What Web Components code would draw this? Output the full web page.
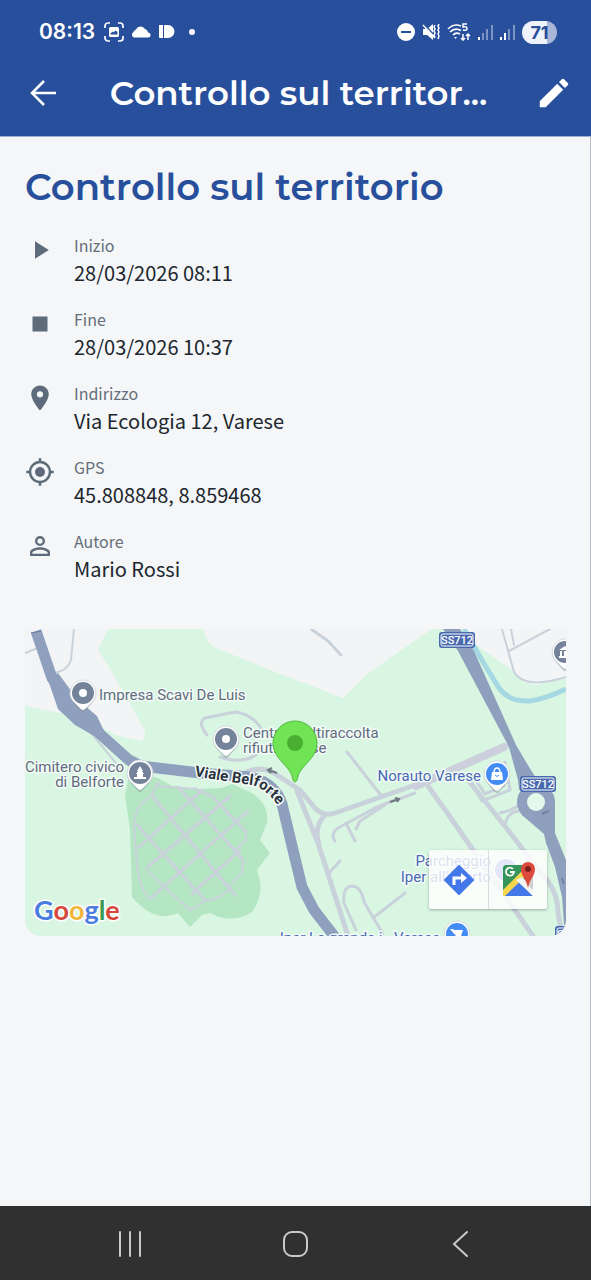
<!DOCTYPE html>
<html lang="it">
<head>
<meta charset="utf-8">
<meta name="viewport" content="width=device-width, initial-scale=1">
<title>Controllo sul territorio</title>
<style>
    body {
        margin: 0;
        background: #f4f6f8;
    }
</style>
</head>
<body>
<control-page>
    <status-bar slot="top" time="08:13" battery="71"></status-bar>
    <app-bar slot="top">Controllo sul territor...</app-bar>

    <page-title>Controllo sul territorio</page-title>
    <detail-list>
        <detail-row icon="play" label="Inizio">28/03/2026 08:11</detail-row>
        <detail-row icon="stop" label="Fine">28/03/2026 10:37</detail-row>
        <detail-row icon="place" label="Indirizzo">Via Ecologia 12, Varese</detail-row>
        <detail-row icon="gps" label="GPS">45.808848, 8.859468</detail-row>
        <detail-row icon="person" label="Autore">Mario Rossi</detail-row>
    </detail-list>
    <place-map></place-map>

    <system-nav slot="bottom"></system-nav>
</control-page>

<script>
// Icons of the detail rows, all on a 24 unit grid.
const ICONS = {
    play: '<path d="M8 5v14l11-7z"/>',
    stop: '<path d="M6 6h12v12H6z"/>',
    place: '<path d="M12 2C8.13 2 5 5.13 5 9c0 5.25 7 13 7 13s7-7.75 7-13c0-3.87-3.13-7-7-7zm0 9.500a2.500 2.500 0 1 1 0-5 2.500 2.500 0 0 1 0 5z"/>',
    gps: '<path d="M12 8a4 4 0 1 0 0 8 4 4 0 0 0 0-8zm8.940 3A9 9 0 0 0 13 3.060V1h-2v2.060A9 9 0 0 0 3.060 11H1v2h2.060A9 9 0 0 0 11 20.940V23h2v-2.060A9 9 0 0 0 20.940 13H23v-2h-2.060zM12 19a7 7 0 1 1 0-14 7 7 0 0 1 0 14z"/>',
    person: '<path d="M12 5.900a2.100 2.100 0 1 1 0 4.200 2.100 2.100 0 0 1 0-4.200m0 9c2.970 0 6.100 1.460 6.100 2.100v1.100H5.900V17c0-.64 3.130-2.100 6.100-2.100M12 4a4 4 0 1 0 0 8 4 4 0 0 0 0-8zm0 9c-2.670 0-8 1.340-8 4v3h16v-3c0-2.660-5.330-4-8-4z"/>'
};

// ### Page frame: header, scrolling content, system bar ###
class ControlPage extends HTMLElement {
    constructor() {
        super();
        this.attachShadow({ mode: 'open' });
    }

    connectedCallback() {
        this.shadowRoot.innerHTML = `
            <style>
                :host {
                    display: flex;
                    flex-direction: column;
                    min-height: 100vh;
                    background: #f4f6f8;
                }
                header {
                    background: #284f9b;
                    color: #fff;
                    border-bottom: 1px solid #9fb0d2;
                }
                main {
                    flex: 1;
                    padding: 28px 24px 24px 25px;
                    border-right: 1px solid #b9bcc2;
                }
            </style>
            <header><slot name="top"></slot></header>
            <main><slot></slot></main>
            <slot name="bottom"></slot>
        `;
    }
}

class StatusBar extends HTMLElement {
    constructor() {
        super();
        this.attachShadow({ mode: 'open' });
    }

    connectedCallback() {
        this.shadowRoot.innerHTML = `
            <style>
                :host {
                    display: flex;
                    align-items: center;
                    justify-content: space-between;
                    height: 36px;
                    padding: 14px 34px 0 39px;
                    font-family: Inter, "Liberation Sans", sans-serif;
                }
                div {
                    display: flex;
                    align-items: center;
                    gap: 7px;
                }
                time {
                    font-size: 21px;
                    font-weight: 600;
                    line-height: 24px;
                    margin-right: 2px;
                }
                svg {
                    display: block;
                    fill: currentColor;
                }
                .battery {
                    width: 35px;
                    border-radius: 12px;
                    background: linear-gradient(90deg, #eef2fa 72%, #a9b8d8 72%);
                    color: #284f9b;
                    font-size: 18px;
                    font-weight: 700;
                    line-height: 23px;
                    text-align: center;
                }
            </style>
            <div>
                <time>${this.getAttribute('time')}</time>
                <svg width="20" height="20" viewBox="0 0 20 20">
                    <path d="M1 6V4a3 3 0 0 1 3-3h2M14 1h2a3 3 0 0 1 3 3v2M19 14v2a3 3 0 0 1-3 3h-2M6 19H4a3 3 0 0 1-3-3v-2" fill="none" stroke="currentColor" stroke-width="1.700"/>
                    <path fill-rule="evenodd" d="M6.500 5h7A1.500 1.500 0 0 1 15 6.500v7a1.500 1.500 0 0 1-1.500 1.500h-7A1.500 1.500 0 0 1 5 13.500v-7A1.500 1.500 0 0 1 6.500 5zM6.500 12.500h7V10l-2-1.500-2 2-1-1-2 2z"/>
                </svg>
                <svg width="20" height="14" viewBox="0 0 20 14"><path d="M3 12.500A3 3 0 0 1 2.500 7 4 4 0 0 1 5 4.500 5 5 0 0 1 14 4 4 4 0 0 1 17 7.500a2.500 2.500 0 0 1 0 5z"/></svg>
                <svg width="18" height="14" viewBox="0 0 18 14"><path d="M1 0h4v13H2a1 1 0 0 1-1-1zM6 0h4a6.500 6.500 0 0 1 0 13H6z"/></svg>
                <svg width="16" height="8" viewBox="0 0 16 8"><circle cx="9" cy="4" r="3"/></svg>
            </div>
            <div>
                <svg width="18" height="18" viewBox="0 0 18 18"><path fill-rule="evenodd" d="M9 0a9 9 0 1 1 0 18A9 9 0 0 1 9 0zM4 8v2h10V8z"/></svg>
                <svg width="18" height="18" viewBox="0 0 18 18">
                    <path d="M1 6h4l6-5v16l-6-5H1z"/>
                    <path d="M2 1l10 11" stroke="#284f9b" stroke-width="1.500"/>
                    <path d="M1 2l12 13M13 2l-1 2 1 2-1 2 1 2-1 2 1 2M17 1l-1 2 1 2-1 2 1 2-1 2 1 2-1 3" fill="none" stroke="currentColor" stroke-width="1.500"/>
                </svg>
                <svg width="24" height="18" viewBox="0 0 24 18">
                    <path d="M1 6Q7 0 14 3M3 9Q8 4 14 7.500M6 12Q9 9 13 11" fill="none" stroke="currentColor" stroke-width="1.700"/>
                    <path d="M7 14h3l-1.500 2z"/>
                    <path d="M16 11v6M14 15l2 2 2-2M21 17v-6M19 13l2-2 2 2M20 1h-4v3q4-1 4 1.500T16 7" fill="none" stroke="currentColor" stroke-width="1.500"/>
                </svg>
                <svg width="15" height="16" viewBox="0 0 15 16"><path d="M0 13h2v3H0z"/><path opacity=".4" d="M4 9h2v7H4zM8 5h2v11H8zM13 1h2v15h-2z"/></svg>
                <svg width="15" height="16" viewBox="0 0 15 16"><path d="M0 13h2v3H0zM4 9h2v7H4z"/><path opacity=".4" d="M8 5h2v11H8zM13 1h2v15h-2z"/></svg>
                <span class="battery">${this.getAttribute('battery')}</span>
            </div>
        `;
    }
}

class AppBar extends HTMLElement {
    constructor() {
        super();
        this.attachShadow({ mode: 'open' });
    }

    connectedCallback() {
        this.shadowRoot.innerHTML = `
            <style>
                :host {
                    display: flex;
                    align-items: center;
                    height: 86px;
                    padding: 0 18px 0 24px;
                    font-family: Montserrat, Inter, "Liberation Sans", sans-serif;
                }
                .title {
                    flex: 1;
                    min-width: 0;
                    overflow: hidden;
                    white-space: nowrap;
                    text-align: center;
                    font-size: 34px;
                    font-weight: 600;
                    line-height: 44px;
                }
                button {
                    padding: 0;
                    border: 0;
                    background: none;
                    color: inherit;
                    cursor: pointer;
                }
                svg {
                    display: block;
                }
            </style>
            <button type="button" aria-label="Indietro">
                <svg width="38" height="38" viewBox="0 0 38 38" fill="none" stroke="currentColor" stroke-width="2.500"><path d="M32 19H8M20 7L8 19l12 12"/></svg>
            </button>
            <span class="title"><slot></slot></span>
            <button type="button" aria-label="Modifica">
                <svg width="38" height="38" viewBox="0 0 24 24" fill="currentColor"><path d="M3 17.250V21h3.750L17.810 9.940l-3.750-3.750L3 17.250zM20.710 7.040a1 1 0 0 0 0-1.410l-2.340-2.340a1 1 0 0 0-1.410 0l-1.830 1.830 3.750 3.750 1.830-1.830z"/></svg>
            </button>
        `;
    }
}

class PageTitle extends HTMLElement {
    constructor() {
        super();
        this.attachShadow({ mode: 'open' });
    }

    connectedCallback() {
        this.shadowRoot.innerHTML = `
            <style>
                :host {
                    display: block;
                    margin-bottom: 23px;
                }
                h1 {
                    margin: 0;
                    color: #284f9b;
                    font: 600 37px/44px Montserrat, Inter, "Liberation Sans", sans-serif;
                }
            </style>
            <h1><slot></slot></h1>
        `;
    }
}

class DetailList extends HTMLElement {
    constructor() {
        super();
        this.attachShadow({ mode: 'open' });
    }

    connectedCallback() {
        this.shadowRoot.innerHTML = `
            <style>
                :host {
                    display: flex;
                    flex-direction: column;
                    gap: 18px;
                    margin-bottom: 45px;
                }
            </style>
            <slot></slot>
        `;
    }
}

class DetailRow extends HTMLElement {
    constructor() {
        super();
        this.attachShadow({ mode: 'open' });
    }

    connectedCallback() {
        this.shadowRoot.innerHTML = `
            <style>
                :host {
                    display: flex;
                    gap: 19px;
                    font-family: "Noto Sans CJK JP", "Noto Sans", sans-serif;
                }
                svg {
                    flex: none;
                    margin-top: 3px;
                    fill: #5d6b7a;
                }
                .label {
                    color: #646e79;
                    font-size: 16px;
                    line-height: 26px;
                }
                .value {
                    color: #20262d;
                    font-size: 20px;
                    line-height: 30px;
                }
            </style>
            <svg width="30" height="30" viewBox="0 0 24 24" aria-hidden="true">${ICONS[this.getAttribute('icon')]}</svg>
            <div>
                <div class="label">${this.getAttribute('label')}</div>
                <div class="value"><slot></slot></div>
            </div>
        `;
    }
}

// ### Map card ###
class PlaceMap extends HTMLElement {
    constructor() {
        super();
        this.attachShadow({ mode: 'open' });
    }

    // A small round pin with a tail, the glyph is drawn around 0,0.
    poi(x, y, color, glyph) {
        return `
            <g transform="translate(${x} ${y})">
                <path d="M0-13a13 13 0 0 1 10 21L2 17q-2 2-4 0l-8-9A13 13 0 0 1 0-13z" fill="#7f8b90" opacity=".5" transform="translate(0 1)"/>
                <path d="M0-13a13 13 0 0 1 10 21L2 16q-2 2-4 0l-8-8A13 13 0 0 1 0-13z" fill="#fff" stroke="#d4dcdf"/>
                <circle r="11" fill="${color}"/>
                ${glyph}
            </g>`;
    }

    shield(x, y) {
        return `
            <g transform="translate(${x} ${y})">
                <rect x="-18" y="-8" width="36" height="16" rx="3" fill="#4869ae"/>
                <rect x="-16" y="-6" width="32" height="12" rx="2" fill="none" stroke="#fff"/>
                <text class="shield" y="4">SS712</text>
            </g>`;
    }

    connectedCallback() {
        const dot = '<circle r="4" fill="#fff"/>';
        this.shadowRoot.innerHTML = `
            <style>
                :host {
                    display: block;
                    position: relative;
                    overflow: hidden;
                    border-radius: 0 0 16px 16px;
                    font-family: Roboto, "Liberation Sans", sans-serif;
                }
                .map {
                    display: block;
                    width: 100%;
                    height: auto;
                }
                text {
                    fill: #616d7e;
                    font-size: 15px;
                    stroke: #f3fbf6;
                    stroke-width: 3px;
                    stroke-linejoin: round;
                    paint-order: stroke;
                }
                .end { text-anchor: end; }
                .shop { fill: #4968b4; }
                .street { fill: #29323e; font-weight: 700; }
                .shield {
                    fill: #fff;
                    stroke: none;
                    font-size: 11px;
                    font-weight: 500;
                    text-anchor: middle;
                }
                .google {
                    font-family: Lato, sans-serif;
                    font-size: 27px;
                    font-weight: 700;
                    stroke: #fff;
                }
                .road { fill: none; stroke: #c9d2da; stroke-linecap: round; stroke-linejoin: round; }
                .main { fill: none; stroke: #8ea0bd; stroke-linejoin: round; }
                /* Buttons that float over the map. */
                nav {
                    position: absolute;
                    right: 19px;
                    bottom: 27px;
                    display: flex;
                    background: rgba(255, 255, 255, .8);
                    border-radius: 2px;
                    box-shadow: 0 1px 3px rgba(0, 0, 0, .3);
                }
                nav a {
                    display: grid;
                    place-items: center;
                    width: 59px;
                    height: 59px;
                }
                nav a + a {
                    width: 58px;
                    border-left: 1px solid #d7dfe0;
                }
            </style>
            <svg class="map" viewBox="25 629 541 307" role="img" aria-label="Mappa">
                <defs>
                    <path id="street" d="M194 776Q230 782 252 785 268 789 284 814"/>
                </defs>
                <rect x="25" y="629" width="541" height="307" fill="#d9f6e3"/>
                <path fill="#f3f4f6" d="M25 629H108L98 650 112 672 128 700 145 731Q145 741 140 741L116 735 90 722 75 716 25 706zM203 629L208 642 214 647 270 670 343 698 365 676 391 657 432 629zM462 629L480 648 514 671 523 682 537 685 566 676V629z"/>
                <path fill="#b5e6c4" d="M130 770L158 778 172 786 200 789 222 788 232 784 252 793Q270 805 267 823L260 840 270 853 257 870Q266 892 252 912 232 925 210 913L202 915 190 927 178 913Q155 924 132 897L130 830 125 796z"/>

                <!-- Paths in the cemetery -->
                <g class="road" stroke-width="3">
                    <path d="M195 789L213 797 246 832M178 787L243 860M153 797L235 895M135 823L205 900"/>
                    <path d="M138 848L202 790M147 868L230 796M152 897L248 811M192 894L240 850"/>
                </g>
                <path class="road" stroke-width="2" d="M158 782L152 795Q135 805 134 825L137 865Q140 890 150 899L156 894M147 871L190 910Q198 906 204 901 218 900 226 892L242 872 243 860M246 832V840L235 850M158 786L195 789"/>

                <!-- Minor roads -->
                <g class="road" stroke-width="2">
                    <path d="M74 629L71 660Q68 670 55 673M25 653L38 648M82 722L120 768M502 629L514 672Q525 690 566 677M509 651L550 629M511 629L514 645"/>
                    <path stroke-width="3" d="M207 735Q197 722 205 718L235 712Q253 714 263 731M220 757Q246 766 262 750M311 629L328 641 341 655"/>
                    <path stroke-width="3" d="M347 752L380 794M328 874L340 861M335 841Q330 834 338 828L375 808 397 799M346 823L355 841M356 829L360 821 385 805M356 930L344 903Q342 886 353 886 362 888 364 902L383 934M373 918L405 893"/>
                    <path stroke-width="3" d="M470 780L482 801 510 790 505 762M473 776L485 794 504 786 499 766M500 813Q514 810 522 803M505 826Q507 810 522 811M397 800L415 793"/>
                </g>
                <g class="road" stroke-width="5">
                    <path d="M247 772Q262 765 277 775L300 790 315 808Q323 817 335 813L415 785 507 746"/>
                    <path d="M297 791L318 843 348 936M325 815Q313 828 319 844M428 786L448 814 480 860 533 936M468 780L508 830 540 872Q558 890 558 912L562 936"/>
                    <path stroke-width="8" stroke="#ccd0dd" d="M416 786L504 747"/>
                </g>
                <path fill="none" stroke="#6f7a80" stroke-width="2" d="M268 770l9 3M272 768l-4 2 3 3M390 802l9-3M395 798l4 1-2 3"/>

                <!-- Stream and state roads -->
                <path fill="none" stroke="#a5d8e3" stroke-width="5" d="M464 629L483 662 499 688Q509 702 530 701 545 699 566 689"/>
                <path class="main" stroke-width="11" d="M36 631L52 678 73 707 100 734 129 760 141 766 200 773 250 777Q275 783 282 804L293 850 302 887 314 910 338 941"/>
                <path fill="#8ea0bd" d="M48 680L58 673 78 700 97 716 105 733 94 736 75 725 58 709z"/>
                <path fill="#8ea0bd" d="M443 629H460L474 651 516 745 529 767 540 784 519 790 518 780 509 747 458 651z"/>
                <circle cx="536" cy="802" r="19" fill="#8ea0bd"/>
                <path fill="#8ea0bd" d="M522 815L544 834 546 843 555 867 562 897 564 925H566V860L555 833V802z"/>
                <circle cx="536" cy="802" r="9" fill="#e5f8ec"/>
                <path stroke="#6f819f" d="M542 814l7-3M562 878l2 6" stroke-width="2"/>
                <path fill="none" stroke="#687d9f" d="M31 633l10-2"/>

                <!-- Labels -->
                <text x="99" y="700">Impresa Scavi De Luis</text>
                <text x="243" y="738">Centro Multiraccolta</text>
                <text x="243" y="753">rifiuti Varese</text>
                <text class="end" x="124" y="772">Cimitero civico</text>
                <text class="end" x="124" y="787">di Belforte</text>
                <text class="street"><textPath href="#street">Viale Belforte</textPath></text>
                <text class="shop end" x="481" y="781">Norauto Varese</text>
                <text class="shop end" x="491" y="866">Parcheggio</text>
                <text class="shop end" x="491" y="882">Iper all'aperto</text>
                <text class="shop end" x="440" y="943">Iper La grande i - Varese</text>

                ${this.shield(457, 640)}
                ${this.shield(538, 784)}
                ${this.shield(573, 934)}
                ${this.poi(83, 693, '#74839a', dot)}
                ${this.poi(226, 739, '#74839a', dot)}
                ${this.poi(140, 773, '#74839a', '<path d="M-6 6V4h3V1h-1l2-3h-1l3-5 3 5H2l2 3H3v3h3v2z" fill="#fff"/>')}
                ${this.poi(565, 652, '#74839a', '<path d="M-6-2l6-4 6 4zM-5-1h2v5h-2zM-1-1h2v5h-2zM-6 4H6v2H-6z" fill="#fff"/>')}
                ${this.poi(497, 774, '#438cf5', '<path d="M-5-2H5L6 6H-6z" fill="#fff"/><path d="M-3-1Q-3-6 0-6T3-1" fill="none" stroke="#fff" stroke-width="1.500"/><path d="M-2 1Q0 4 2 1" fill="none" stroke="#438cf5"/>')}
                ${this.poi(506, 870, '#7686d8', '')}
                ${this.poi(457, 934, '#438cf5', '<path d="M-7-5h3l1 1H6L4 2h-5z" fill="#fff"/>')}

                <!-- Position of the control -->
                <path d="M295 721a22 22 0 0 1 22 22c0 12-9 18-16 27q-3 4-4 10-2 4-4 0-1-6-4-10c-7-9-16-15-16-27a22 22 0 0 1 22-22z" fill="#70e455" stroke="#54b940"/>
                <circle cx="295" cy="743" r="8" fill="#49ae32"/>

                <text class="google" x="34" y="920"><tspan fill="#4a7de0">G</tspan><tspan fill="#d5483c">o</tspan><tspan fill="#efb73a">o</tspan><tspan fill="#4a7de0">g</tspan><tspan fill="#3c9a50">l</tspan><tspan fill="#d5483c">e</tspan></text>
            </svg>
            <nav>
                <a href="#indicazioni" aria-label="Indicazioni stradali">
                    <svg width="32" height="32" viewBox="0 0 32 32">
                        <path d="M16 2l14 14-14 14L2 16z" fill="#4478ea" stroke="#4478ea" stroke-width="2" stroke-linejoin="round"/>
                        <path d="M11 21v-7h9" fill="none" stroke="#fff" stroke-width="3"/><path d="M18 9l6 5-6 5z" fill="#fff"/>
                    </svg>
                </a>
                <a href="#mappa" aria-label="Apri in Google Maps">
                    <svg width="36" height="36" viewBox="0 0 36 36">
                        <path d="M5 3h24v30H3V5z" fill="#35945a"/>
                        <path d="M3 34l15-15 15 15z" fill="#4478e8"/>
                        <path d="M3 28L28 3h4v5L5 34H3z" fill="#f5d64c"/>
                        <path d="M22 15l11 11v8L16 18z" fill="#f3f3f2"/>
                        <path d="M25 12h8v16l-7-7z" fill="#d2d0cc"/>
                        <path d="M13 7a4 4 0 1 0 1 3h-4" fill="none" stroke="#fff" stroke-width="1.800"/>
                        <path d="M28 0a7 7 0 0 1 7 7c0 7-5 9-7 19-2-10-7-12-7-19a7 7 0 0 1 7-7z" fill="#dc4a3d"/>
                        <circle cx="28" cy="7" r="3" fill="#7d201b"/>
                    </svg>
                </a>
            </nav>
        `;
    }
}

class SystemNav extends HTMLElement {
    constructor() {
        super();
        this.attachShadow({ mode: 'open' });
    }

    connectedCallback() {
        this.shadowRoot.innerHTML = `
            <style>
                :host {
                    display: grid;
                    grid-template-columns: repeat(3, 1fr);
                    height: 74px;
                    padding: 0 48px;
                    background: #303030;
                    color: #c9c9c9;
                }
                button {
                    display: grid;
                    place-items: center;
                    padding: 2px 0 0;
                    border: 0;
                    background: none;
                    color: inherit;
                }
                svg {
                    fill: none;
                    stroke: currentColor;
                    stroke-width: 2;
                    stroke-linecap: round;
                }
            </style>
            <button type="button" aria-label="Recenti"><svg width="28" height="28" viewBox="0 0 28 28"><path d="M3 2v24M13 2v24M23 2v24"/></svg></button>
            <button type="button" aria-label="Home"><svg width="28" height="28" viewBox="0 0 28 28"><rect x="2" y="2" width="23" height="24" rx="8"/></svg></button>
            <button type="button" aria-label="Indietro"><svg width="28" height="28" viewBox="0 0 28 28"><path d="M20 2L7 14l13 12"/></svg></button>
        `;
    }
}

customElements.define('control-page', ControlPage);
customElements.define('status-bar', StatusBar);
customElements.define('app-bar', AppBar);
customElements.define('page-title', PageTitle);
customElements.define('detail-list', DetailList);
customElements.define('detail-row', DetailRow);
customElements.define('place-map', PlaceMap);
customElements.define('system-nav', SystemNav);
</script>
</body>
</html>
